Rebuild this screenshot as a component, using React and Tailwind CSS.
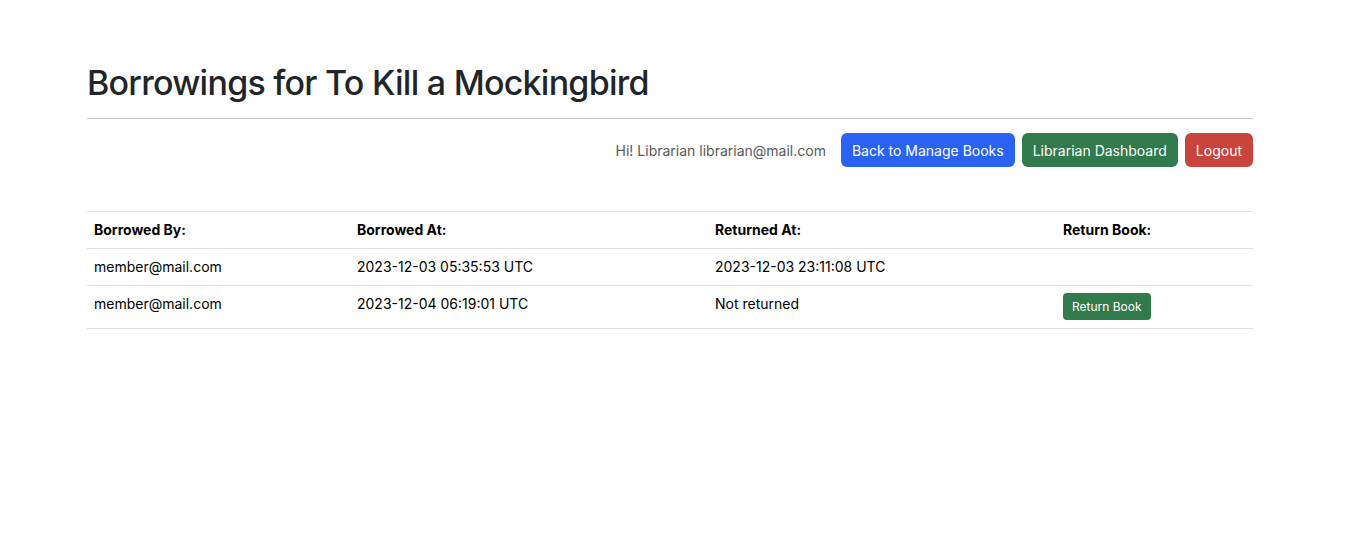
const borrowings = [
  {
    id: 1,
    member: "member@mail.com",
    borrowedAt: "2023-12-03 05:35:53 UTC",
    returnedAt: "2023-12-03 23:11:08 UTC",
  },
  {
    id: 2,
    member: "member@mail.com",
    borrowedAt: "2023-12-04 06:19:01 UTC",
    returnedAt: null,
  },
];

const App = () => {
  return (
    <div className="min-h-[556px] bg-white text-[#212529] font-['Inter',sans-serif]">
      <div className="ml-[87px] w-[1166px] pt-[59px]">
        {/* Title */}
        <h1 className="text-[34px] leading-[48px] font-medium tracking-[-0.75px]">
          Borrowings for To Kill a Mockingbird
        </h1>
        <hr className="mt-[11px] border-0 border-t border-[#c6c6c6]" />

        {/* User bar */}
        <div className="mt-[14px] flex items-center justify-end gap-[7px]">
          <span className="mr-[8px] text-[14px] text-[#595959]">
            Hi! Librarian librarian@mail.com
          </span>
          <button className="h-[34px] rounded-[6px] bg-[#2a62f4] px-[11px] text-[14px] text-white">
            Back to Manage Books
          </button>
          <button className="h-[34px] rounded-[6px] bg-[#317a4c] px-[11px] text-[14px] text-white">
            Librarian Dashboard
          </button>
          <button className="h-[34px] rounded-[6px] bg-[#c8443c] px-[11px] text-[14px] text-white">
            Logout
          </button>
        </div>

        {/* Borrowings table */}
        <table className="mt-[44px] w-full border-collapse text-[14px] leading-[20px] text-black">
          <thead>
            <tr className="border-y border-[#dee2e6] text-left">
              <th className="w-[263px] px-[7px] py-[8px] font-bold">Borrowed By:</th>
              <th className="w-[358px] px-[7px] py-[8px] font-bold">Borrowed At:</th>
              <th className="w-[348px] px-[7px] py-[8px] font-bold">Returned At:</th>
              <th className="px-[7px] py-[8px] font-bold">Return Book:</th>
            </tr>
          </thead>
          <tbody>
            {borrowings.map((b) => (
              <tr key={b.id} className="border-b border-[#dee2e6] align-top">
                <td className="px-[7px] py-[8px]">{b.member}</td>
                <td className="px-[7px] py-[8px]">{b.borrowedAt}</td>
                <td className="px-[7px] py-[8px]">
                  {b.returnedAt ? b.returnedAt : "Not returned"}
                </td>
                <td className="px-[7px] pt-[7px] pb-[8px]">
                  {!b.returnedAt && (
                    <button className="h-[27px] rounded-[4px] bg-[#317a4c] px-[9px] text-[12px] text-white">
                      Return Book
                    </button>
                  )}
                </td>
              </tr>
            ))}
          </tbody>
        </table>
      </div>
    </div>
  );
};

export default App;
